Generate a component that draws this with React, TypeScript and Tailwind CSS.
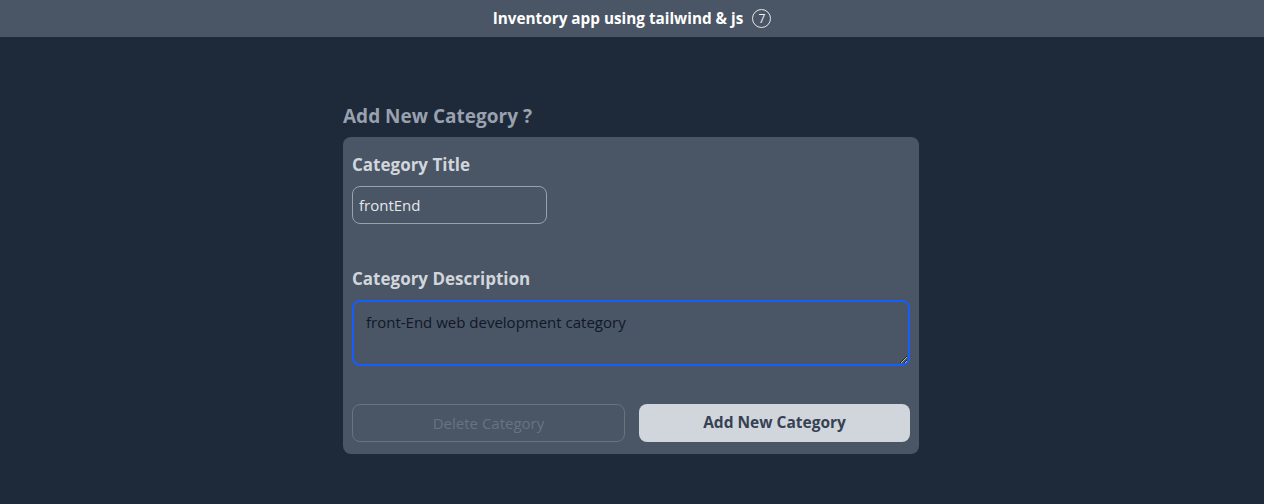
import { useEffect, useRef } from "react";

export default function App() {
  const descRef = useRef<HTMLTextAreaElement>(null);

  useEffect(() => {
    const el = descRef.current;
    if (el) {
      el.focus();
      el.setSelectionRange(6, 6);
    }
  }, []);

  return (
    <div className="min-h-screen bg-gray-800 font-['Open_Sans',sans-serif]">
      <header className="flex h-[37px] items-center justify-center gap-[9px] bg-gray-600 text-[15.3px] font-bold text-white">
        <span>Inventory app using tailwind &amp; js</span>
        <span className="flex h-[19px] w-[19px] items-center justify-center rounded-full border border-gray-200 text-[12px] font-normal leading-none text-gray-100">
          7
        </span>
      </header>

      <main className="mx-auto mt-[65px] w-[576px] -translate-x-px">
        <h2 className="mb-[7px] text-[19px] leading-7 font-bold text-gray-400">Add New Category ?</h2>

        <form className="rounded-lg bg-gray-600 px-[9px] pt-[14px] pb-3">
          <label className="mb-[7px] block text-[17px] leading-7 font-bold text-gray-300">
            Category Title
          </label>
          <input
            type="text"
            defaultValue="frontEnd"
            className="block h-[38px] w-[195px] rounded-lg border border-gray-400 bg-transparent px-[6px] text-[15px] text-gray-200 outline-none"
          />

          <label className="mt-[41px] mb-[7px] block text-[17px] leading-7 font-bold text-gray-300">
            Category Description
          </label>
          <textarea
            ref={descRef}
            defaultValue="front-End web development category"
            className="block h-[66px] w-full rounded-lg border-2 border-blue-600 bg-transparent px-3 py-[9px] text-[15px] text-gray-900 caret-gray-900 outline-none"
          />

          <div className="mt-[38px] flex gap-[14px]">
            <button
              type="button"
              disabled
              className="h-[38px] flex-1 rounded-lg border border-gray-500 text-[15px] text-gray-500"
            >
              Delete Category
            </button>
            <button
              type="button"
              className="h-[38px] flex-1 rounded-lg bg-gray-300 text-[15.5px] font-bold text-gray-700"
            >
              Add New Category
            </button>
          </div>
        </form>
      </main>
    </div>
  );
}
